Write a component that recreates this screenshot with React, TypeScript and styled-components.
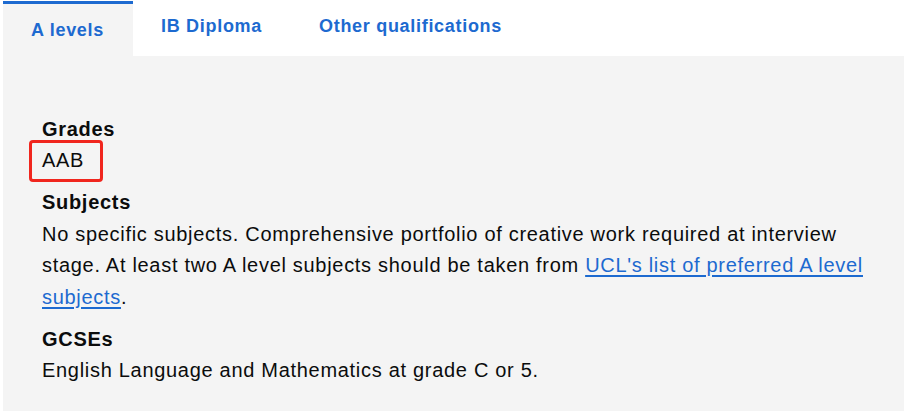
import React, { useState } from "react";
import styled, { createGlobalStyle } from "styled-components";

const GlobalStyle = createGlobalStyle`
  body {
    margin: 0;
    background: #ffffff;
    font-family: "Liberation Sans", Arial, sans-serif;
    color: #0b0c0c;
  }
`;

const Wrapper = styled.div`
  padding: 1px 0 0 3px;
  width: 904px;
  height: 411px;
  box-sizing: border-box;
  display: flex;
  flex-direction: column;
`;

const TabList = styled.div`
  display: flex;
  align-items: flex-start;
  height: 55px;
`;

const Tab = styled.button<{ active: boolean }>`
  font-family: inherit;
  font-size: 18px;
  font-weight: 700;
  letter-spacing: 0.7px;
  line-height: normal;
  color: #1d6ad0;
  background: ${(p) => (p.active ? "#f4f4f4" : "transparent")};
  border: none;
  border-top: 3px solid ${(p) => (p.active ? "#1d6ad0" : "transparent")};
  padding: ${(p) => (p.active ? "15.5px 29px 0 28px" : "12px 29px 0 28px")};
  height: 55px;
  margin: 0;
  cursor: pointer;
  display: flex;
  align-items: flex-start;
`;

const Panel = styled.div`
  flex: 1;
  background: #f4f4f4;
  padding: 57.5px 30px 0 39px;
`;

const Heading = styled.h3`
  margin: 0;
  font-size: 20px;
  font-weight: 700;
  letter-spacing: 0.7px;
  line-height: 31.5px;
`;

const Text = styled.p<{ gapBelow?: boolean }>`
  margin: 0 0 ${(p) => (p.gapBelow ? "10.5px" : "0")};
  font-size: 20px;
  letter-spacing: 0.7px;
  line-height: 31.5px;
`;

const Highlight = styled.span`
  display: inline-block;
  border: 3px solid #f0261e;
  border-radius: 4px;
  padding: 2px 16px 2px 10px;
  margin: -5px 0 -5px -13px;
  line-height: 31.5px;
`;

const Link = styled.a`
  color: #1d6ad0;
  text-decoration: underline;
  text-underline-offset: 3px;
`;

const tabs = ["A levels", "IB Diploma", "Other qualifications"];

export default function App() {
  const [active, setActive] = useState(0);
  return (
    <>
      <GlobalStyle />
      <Wrapper>
        <TabList>
          {tabs.map((t, i) => (
            <Tab key={t} active={i === active} onClick={() => setActive(i)}>
              {t}
            </Tab>
          ))}
        </TabList>
        <Panel>
          <Heading>Grades</Heading>
          <Text gapBelow>
            <Highlight>AAB</Highlight>
          </Text>
          <Heading>Subjects</Heading>
          <Text gapBelow>
            No specific subjects. Comprehensive portfolio of creative work
            required at interview stage. At least two A level subjects should
            be taken from <Link href="#">UCL's list of preferred A level subjects</Link>.
          </Text>
          <Heading>GCSEs</Heading>
          <Text>English Language and Mathematics at grade C or 5.</Text>
        </Panel>
      </Wrapper>
    </>
  );
}
